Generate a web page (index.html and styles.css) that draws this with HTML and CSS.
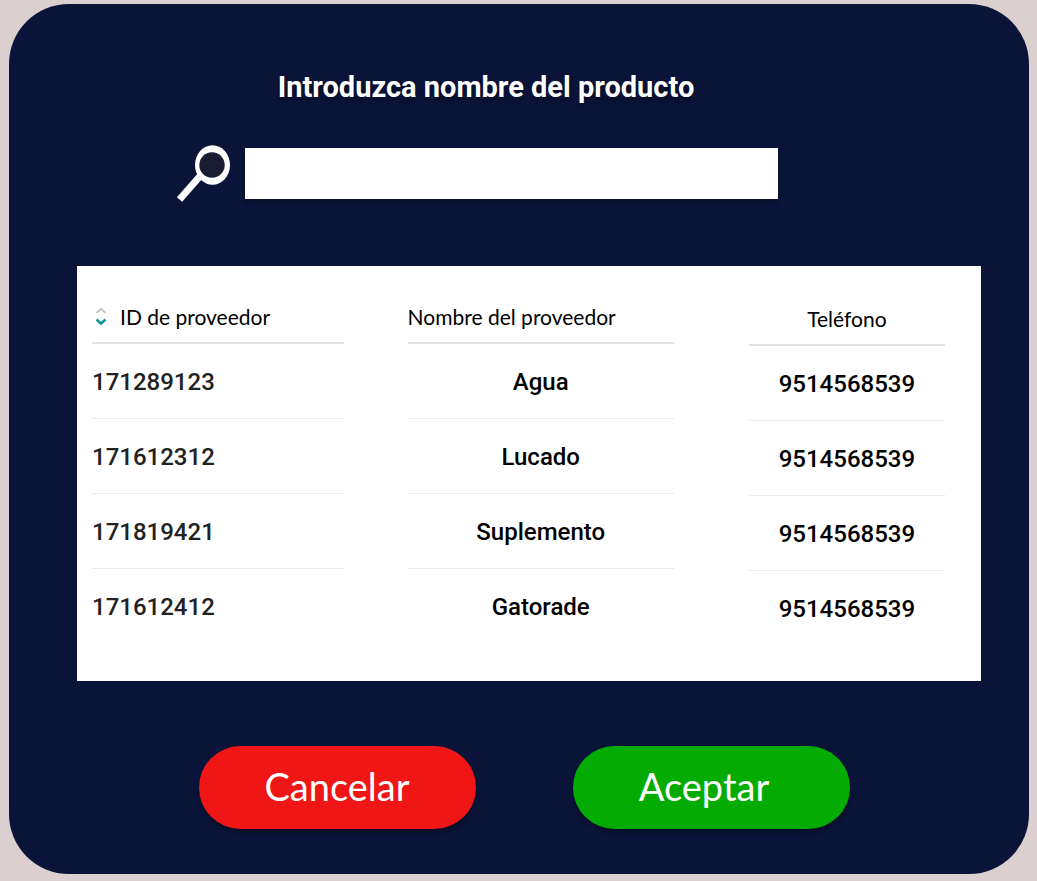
FILE: index.html
```html
<!DOCTYPE html>
<html lang="es">
<head>
<meta charset="utf-8">
<meta name="viewport" content="width=device-width, initial-scale=1">
<title>Buscar producto</title>
<link rel="stylesheet" href="styles.css">
</head>
<body>
<main class="card">
  <form class="form">
    <label class="title" for="producto">Introduzca nombre del producto</label>
    <div class="search">
      <svg class="search-icon" viewBox="0 0 54 58" aria-hidden="true">
        <path d="M24 31 2.500 55.500" fill="none" stroke="#fff" stroke-width="7"/>
        <ellipse cx="35.500" cy="21" rx="17.500" ry="19.700" fill="#fff"/>
        <circle cx="35" cy="21" r="12.700" fill="#191c33"/>
      </svg>
      <input class="search-input" id="producto" type="text">
    </div>
    <div class="panel">
      <table class="table">
        <thead>
          <tr>
            <th class="col-id"><div class="head head-id">
              <svg class="sort" viewBox="0 0 12 20" aria-hidden="true">
                <path d="M1.500 7 6 2.800l4.500 4.200" fill="none" stroke="#c4c8c8" stroke-width="2"/>
                <path d="M1.500 13.500 6 17.500l4.500-4" fill="none" stroke="#0c9696" stroke-width="2.500"/>
              </svg>ID de proveedor</div></th>
            <th class="col-name"><div class="head">Nombre del proveedor</div></th>
            <th class="col-phone"><div class="head head-phone">Teléfono</div></th>
          </tr>
        </thead>
        <tbody>
          <tr><td class="col-id"><div class="cell">171289123</div></td><td class="col-name"><div class="cell">Agua</div></td><td class="col-phone"><div class="cell">9514568539</div></td></tr>
          <tr><td class="col-id"><div class="cell">171612312</div></td><td class="col-name"><div class="cell">Lucado</div></td><td class="col-phone"><div class="cell">9514568539</div></td></tr>
          <tr><td class="col-id"><div class="cell">171819421</div></td><td class="col-name"><div class="cell">Suplemento</div></td><td class="col-phone"><div class="cell">9514568539</div></td></tr>
          <tr><td class="col-id"><div class="cell">171612412</div></td><td class="col-name"><div class="cell">Gatorade</div></td><td class="col-phone"><div class="cell">9514568539</div></td></tr>
        </tbody>
      </table>
    </div>
    <div class="actions">
      <button class="button cancel" type="button">Cancelar</button>
      <button class="button accept" type="submit">Aceptar</button>
    </div>
  </form>
</main>
</body>
</html>
```
FILE: styles.css
```css
* { box-sizing: border-box; }
body {
  margin: 0;
  padding: 4px 8px 7px 9px;
  background: #dbcfcf;
  font-family: Roboto, "Liberation Sans", sans-serif;
}
.card {
  padding: 64px 48px 45px 68px;
  border-radius: 60px;
  background: #0a1438;
}
.form { display: flex; flex-direction: column; }
.title {
  margin-right: 86px;
  color: #fff;
  font-size: 29px;
  font-weight: 700;
  line-height: 38px;
  text-align: center;
  text-shadow: 0 4px 4px rgba(0, 0, 0, 0.3);
}
.search {
  display: flex;
  align-items: center;
  gap: 14px;
  margin: 38px 203px 0 100px;
}
.search-icon { flex: none; width: 54px; height: 58px; overflow: visible; }
.search-input {
  flex: 1;
  min-width: 0;
  height: 51px;
  padding: 0 16px;
  border: 0;
  border-radius: 0;
  background: #fff;
  box-shadow: 0 4px 4px rgba(0, 0, 0, 0.25);
  font: 500 24px Roboto, sans-serif;
}
.panel {
  margin-top: 64px;
  padding: 32px 36px 35px 15px;
  background: #fff;
}
.table {
  width: 100%;
  border-collapse: collapse;
  table-layout: fixed;
}
th, td { padding: 0 0 2px; text-align: left; }
.col-id { width: 37%; padding-right: 64px; color: #222; }
.col-name { width: 40%; padding-right: 75px; }
.col-phone { padding: 2px 0 0; }
.head {
  display: flex;
  align-items: center;
  height: 46px;
  padding-bottom: 8px;
  border-bottom: 2px solid #e3e5e5;
  color: #000;
  font: 400 21px Lato, sans-serif;
  white-space: nowrap;
}
.head-id { gap: 13px; padding-left: 3px; }
.head-phone { justify-content: center; }
.sort { width: 12px; height: 20px; }
.cell {
  height: 73px;
  border-bottom: 1px solid #e9ebeb;
  font-size: 24px;
  font-weight: 500;
  line-height: 72px;
}
.col-name .cell, .col-phone .cell { text-align: center; }
tbody tr:last-child .cell { border-bottom: 0; }
.actions {
  display: flex;
  justify-content: center;
  gap: 97px;
  margin: 65px 10px 0 0;
}
.button {
  width: 277px;
  height: 83px;
  padding: 0 0 4px;
  border: 0;
  border-radius: 42px;
  color: #fff;
  box-shadow: 0 4px 4px rgba(0, 0, 0, 0.25);
  font: 400 38px Lato, sans-serif;
  cursor: pointer;
}
.cancel { background: #f11616; }
.accept { padding-right: 14px; background: #04ab02; }
```
